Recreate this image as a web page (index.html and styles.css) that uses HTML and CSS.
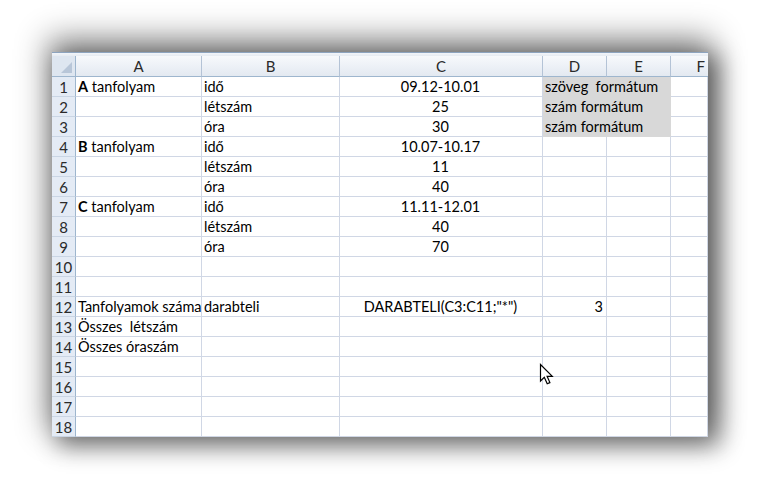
FILE: index.html
```html
<!DOCTYPE html>
<html lang="hu">
<head>
<meta charset="utf-8">
<title>Tanfolyamok</title>
<link rel="stylesheet" href="styles.css">
</head>
<body>
<div class="page">
  <div class="sheet">
    <div class="topline"></div>
    <div class="grid">
      <div class="hd corner"><span class="tri"></span></div>
      <div class="hd col">A</div><div class="hd col">B</div><div class="hd col">C</div><div class="hd col">D</div><div class="hd col">E</div><div class="hd col last">F</div>

      <div class="hd row">1</div><div class="c"><b>A</b>&nbsp;tanfolyam</div><div class="c">idő</div><div class="c ctr">09.12-10.01</div><div class="c gray"><span class="spill">szöveg&nbsp; formátum</span></div><div class="c gray"></div><div class="c"></div>
      <div class="hd row">2</div><div class="c"></div><div class="c">létszám</div><div class="c ctr">25</div><div class="c gray"><span class="spill">szám formátum</span></div><div class="c gray"></div><div class="c"></div>
      <div class="hd row">3</div><div class="c"></div><div class="c">óra</div><div class="c ctr">30</div><div class="c gray"><span class="spill">szám formátum</span></div><div class="c gray"></div><div class="c"></div>
      <div class="hd row">4</div><div class="c"><b>B</b>&nbsp;tanfolyam</div><div class="c">idő</div><div class="c ctr">10.07-10.17</div><div class="c"></div><div class="c"></div><div class="c"></div>
      <div class="hd row">5</div><div class="c"></div><div class="c">létszám</div><div class="c ctr">11</div><div class="c"></div><div class="c"></div><div class="c"></div>
      <div class="hd row">6</div><div class="c"></div><div class="c">óra</div><div class="c ctr">40</div><div class="c"></div><div class="c"></div><div class="c"></div>
      <div class="hd row">7</div><div class="c"><b>C</b>&nbsp;tanfolyam</div><div class="c">idő</div><div class="c ctr">11.11-12.01</div><div class="c"></div><div class="c"></div><div class="c"></div>
      <div class="hd row">8</div><div class="c"></div><div class="c">létszám</div><div class="c ctr">40</div><div class="c"></div><div class="c"></div><div class="c"></div>
      <div class="hd row">9</div><div class="c"></div><div class="c">óra</div><div class="c ctr">70</div><div class="c"></div><div class="c"></div><div class="c"></div>
      <div class="hd row">10</div><div class="c"></div><div class="c"></div><div class="c"></div><div class="c"></div><div class="c"></div><div class="c"></div>
      <div class="hd row">11</div><div class="c"></div><div class="c"></div><div class="c"></div><div class="c"></div><div class="c"></div><div class="c"></div>
      <div class="hd row">12</div><div class="c">Tanfolyamok száma</div><div class="c">darabteli</div><div class="c ctr">DARABTELI(C3:C11;"*")</div><div class="c num">3</div><div class="c"></div><div class="c"></div>
      <div class="hd row">13</div><div class="c">Összes&nbsp; létszám</div><div class="c"></div><div class="c"></div><div class="c"></div><div class="c"></div><div class="c"></div>
      <div class="hd row">14</div><div class="c">Összes óraszám</div><div class="c"></div><div class="c"></div><div class="c"></div><div class="c"></div><div class="c"></div>
      <div class="hd row">15</div><div class="c"></div><div class="c"></div><div class="c"></div><div class="c"></div><div class="c"></div><div class="c"></div>
      <div class="hd row">16</div><div class="c"></div><div class="c"></div><div class="c"></div><div class="c"></div><div class="c"></div><div class="c"></div>
      <div class="hd row">17</div><div class="c"></div><div class="c"></div><div class="c"></div><div class="c"></div><div class="c"></div><div class="c"></div>
      <div class="hd row">18</div><div class="c"></div><div class="c"></div><div class="c"></div><div class="c"></div><div class="c"></div><div class="c"></div>
    </div>
  </div>
  <svg class="cursor" width="15" height="23" viewBox="0 0 15 23">
    <path d="M1.5 1.5 L1.5 18 L5.3 14.3 L8.2 20.8 L10.9 19.6 L8.1 13.3 L13.3 13.3 Z" fill="#fff" stroke="#000" stroke-width="1.2" stroke-linejoin="miter"/>
  </svg>
</div>
</body>
</html>
```
FILE: styles.css
```css
html, body {
  margin: 0;
  padding: 0;
  background: #ffffff;
}
.page {
  position: relative;
  width: 760px;
  height: 490px;
  padding: 52px 0 0 52px;
  box-sizing: border-box;
  font-family: Lato, "Liberation Sans", sans-serif;
}
.sheet {
  width: 656px;
  background: #fff;
  box-shadow: 0 -10px 30px 4px rgba(0, 0, 0, 0.45), 9px 7px 22px 3px rgba(0, 0, 0, 0.45);
}
.topline {
  height: 3px;
  border-top: 1px solid #8da4bf;
  background: linear-gradient(#f2f5f9, #e6ebf2);
}
.grid {
  display: grid;
  grid-template-columns: 24px 126px 138px 203px 64px 64px 37px;
  grid-template-rows: 21px repeat(18, 20px);
  font-size: 14.5px;
  color: #000;
}
.grid > div {
  box-sizing: border-box;
  white-space: nowrap;
  overflow: visible;
  line-height: 20px;
}
.hd {
  color: #2a2a2a;
  font-size: 15px;
}
.col {
  background: linear-gradient(#f7f9fc, #e3e9f1);
  border-right: 1px solid #b4c3d6;
  border-bottom: 1px solid #9eb6ce;
  text-align: center;
}
.col.last {
  border-right: none;
  text-align: right;
  padding-right: 3px;
  overflow: hidden;
}
.corner {
  position: relative;
  background: #dee6f0;
  border-right: 1px solid #9eb6ce;
  border-bottom: 1px solid #9eb6ce;
}
.tri {
  position: absolute;
  right: 3px;
  bottom: 3px;
  width: 0;
  height: 0;
  border-left: 11px solid transparent;
  border-bottom: 11px solid #b8c6d8;
}
.row {
  background: #e4ebf5;
  border-right: 1px solid #9eb6ce;
  border-bottom: 1px solid #c9d5e4;
  text-align: center;
}
.c {
  background: #fff;
  border-right: 1px solid #d0d7e5;
  border-bottom: 1px solid #d0d7e5;
  padding: 0 3px 0 2px;
}
.c b {
  font-weight: 700;
}
.ctr {
  text-align: center;
}
.num {
  text-align: right;
}
.gray {
  background: #d8d8d8;
  border-color: #d8d8d8;
}
.spill {
  position: relative;
  z-index: 1;
}
.cursor {
  position: absolute;
  left: 539px;
  top: 363px;
}
```
